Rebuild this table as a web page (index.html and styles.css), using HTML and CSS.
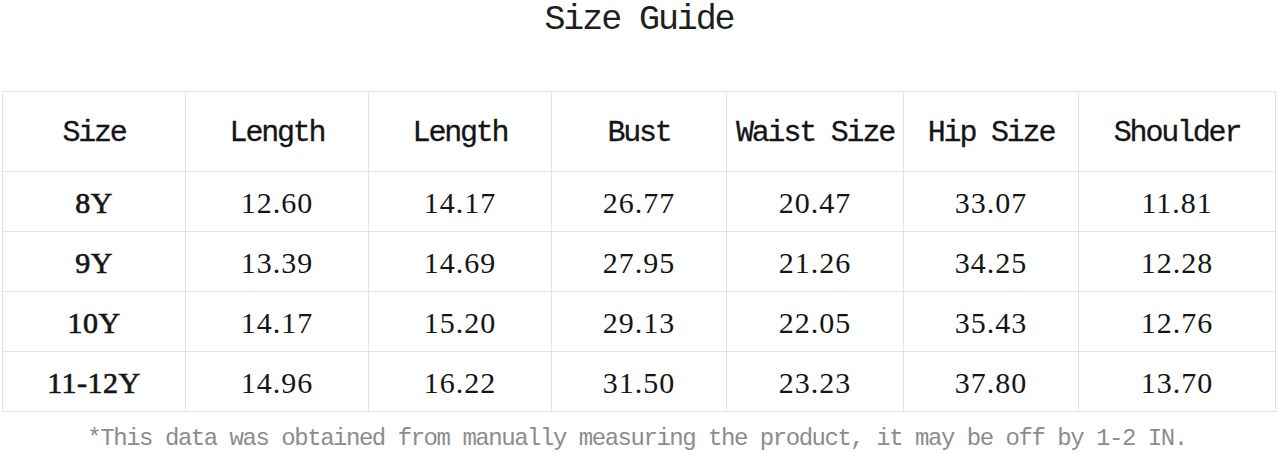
FILE: index.html
```html
<!DOCTYPE html>
<html>
<head>
<meta charset="utf-8">
<title>Size Guide</title>
<link rel="stylesheet" href="styles.css">
</head>
<body>
<div class="page">
  <h1 class="title">Size Guide</h1>
  <div class="grid">
    <div class="cell head">Size</div>
    <div class="cell head">Length</div>
    <div class="cell head">Length</div>
    <div class="cell head">Bust</div>
    <div class="cell head">Waist Size</div>
    <div class="cell head">Hip Size</div>
    <div class="cell head">Shoulder</div>

    <div class="cell label">8Y</div>
    <div class="cell num">12.60</div>
    <div class="cell num">14.17</div>
    <div class="cell num">26.77</div>
    <div class="cell num">20.47</div>
    <div class="cell num">33.07</div>
    <div class="cell num">11.81</div>

    <div class="cell label">9Y</div>
    <div class="cell num">13.39</div>
    <div class="cell num">14.69</div>
    <div class="cell num">27.95</div>
    <div class="cell num">21.26</div>
    <div class="cell num">34.25</div>
    <div class="cell num">12.28</div>

    <div class="cell label">10Y</div>
    <div class="cell num">14.17</div>
    <div class="cell num">15.20</div>
    <div class="cell num">29.13</div>
    <div class="cell num">22.05</div>
    <div class="cell num">35.43</div>
    <div class="cell num">12.76</div>

    <div class="cell label">11-12Y</div>
    <div class="cell num">14.96</div>
    <div class="cell num">16.22</div>
    <div class="cell num">31.50</div>
    <div class="cell num">23.23</div>
    <div class="cell num">37.80</div>
    <div class="cell num">13.70</div>
  </div>
  <p class="note">*This data was obtained from manually measuring the product, it may be off by 1-2 IN.</p>
</div>
</body>
</html>
```

FILE: styles.css
```css
* {
  box-sizing: border-box;
}

html, body {
  margin: 0;
  padding: 0;
  background: #ffffff;
}

.page {
  width: 1278px;
  height: 453px;
  overflow: hidden;
}

.title {
  margin: 0 0 51px 0;
  height: 40px;
  font-family: "Liberation Mono", monospace;
  font-weight: normal;
  font-size: 35px;
  line-height: 40px;
  letter-spacing: -2.1px;
  text-align: center;
  color: #1e1e1e;
}

.grid {
  margin-left: 2px;
  width: 1274px;
  display: grid;
  grid-template-columns: 183px 183px 183px 175px 177px 175px 197px;
  grid-template-rows: 80px 60px 60px 60px 60px;
  border-left: 1px solid #e2e2e2;
  border-top: 1px solid #e2e2e2;
}

.cell {
  display: flex;
  align-items: center;
  justify-content: center;
  border-right: 1px solid #e2e2e2;
  border-bottom: 1px solid #e2e2e2;
  color: #151515;
  white-space: nowrap;
}

.head {
  font-family: "Liberation Mono", monospace;
  font-size: 30px;
  letter-spacing: -2.2px;
  padding-top: 2px;
  -webkit-text-stroke: 0.3px #151515;
}

.num {
  font-family: "Liberation Serif", serif;
  font-size: 30px;
  letter-spacing: 1px;
  padding-top: 2px;
}

.label {
  font-family: "Liberation Serif", serif;
  font-weight: normal;
  font-size: 30px;
  letter-spacing: 0.5px;
  padding-top: 2px;
  -webkit-text-stroke: 0.7px #151515;
}

.note {
  margin: 15px 0 0 0;
  font-family: "Liberation Mono", monospace;
  font-size: 24px;
  line-height: 24px;
  letter-spacing: -1.47px;
  text-align: center;
  color: #8c8c8c;
  white-space: nowrap;
  padding-right: 4px;
}
```
